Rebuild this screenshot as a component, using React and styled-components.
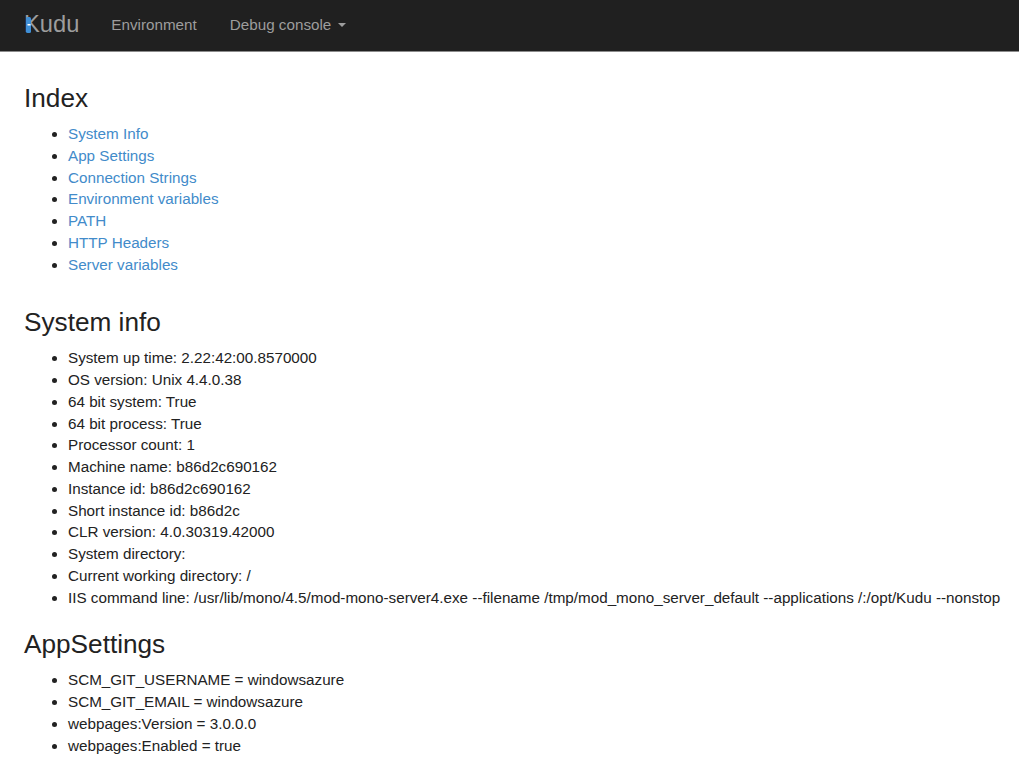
import React from 'react'
import styled, { createGlobalStyle } from 'styled-components'

const GlobalStyle = createGlobalStyle`
  html, body {
    margin: 0;
    padding: 0;
    background: #fff;
    overflow: hidden;
  }
  body {
    font-family: "Liberation Sans", Arial, sans-serif;
    font-size: 15.23px;
    line-height: 21.75px;
    color: #333;
  }
`

const Navbar = styled.nav`
  display: flex;
  align-items: center;
  height: 52px;
  background: #202020;
  border-bottom: 1px solid #8c8c8c;
  padding: 0 0 1px 24px;
  box-sizing: border-box;
`

const Brand = styled.span`
  position: relative;
  font-size: 23.7px;
  color: #9d9d9d;
  margin-right: 32px;
`

const BrandMark = styled.svg`
  position: absolute;
  left: 1px;
  top: 2px;
`

const NavItem = styled.a`
  color: #9d9d9d;
  margin-right: 33px;
  display: flex;
  align-items: center;
`

const Caret = styled.span`
  width: 0;
  height: 0;
  margin-left: 7px;
  border-top: 4px solid #9d9d9d;
  border-left: 4px solid transparent;
  border-right: 4px solid transparent;
`

const Content = styled.main`
  padding-left: 24px;
  white-space: nowrap;
`

const Heading = styled.h2`
  font-size: 26.2px;
  font-weight: 400;
  line-height: 29px;
  color: #222;
  margin: ${(p) => p.$top}px 0 10px;
`

const List = styled.ul`
  margin: 0;
  padding-left: 44px;
`

const Item = styled.li`
  color: #222;
`

const ItemLink = styled.a`
  color: #428bca;
`

const indexLinks = [
  'System Info',
  'App Settings',
  'Connection Strings',
  'Environment variables',
  'PATH',
  'HTTP Headers',
  'Server variables',
]

const systemInfo = [
  'System up time: 2.22:42:00.8570000',
  'OS version: Unix 4.4.0.38',
  '64 bit system: True',
  '64 bit process: True',
  'Processor count: 1',
  'Machine name: b86d2c690162',
  'Instance id: b86d2c690162',
  'Short instance id: b86d2c',
  'CLR version: 4.0.30319.42000',
  'System directory:',
  'Current working directory: /',
  'IIS command line: /usr/lib/mono/4.5/mod-mono-server4.exe --filename /tmp/mod_mono_server_default --applications /:/opt/Kudu --nonstop',
]

const appSettings = [
  'SCM_GIT_USERNAME = windowsazure',
  'SCM_GIT_EMAIL = windowsazure',
  'webpages:Version = 3.0.0.0',
  'webpages:Enabled = true',
]

const App = () => (
  <>
    <GlobalStyle />
    <Navbar>
      <Brand>
        Kudu
        <BrandMark width="8" height="18" viewBox="0 0 8 18">
          <rect x="1" y="1" width="5" height="16" rx="1.5" fill="#3f8fd6" />
          <rect x="2.5" y="8" width="3" height="1.5" fill="#fff" />
        </BrandMark>
      </Brand>
      <NavItem>Environment</NavItem>
      <NavItem>
        Debug console
        <Caret />
      </NavItem>
    </Navbar>
    <Content>
      <Heading $top={32}>Index</Heading>
      <List>
        {indexLinks.map((label) => (
          <Item key={label}>
            <ItemLink>{label}</ItemLink>
          </Item>
        ))}
      </List>
      <Heading $top={33}>System info</Heading>
      <List>
        {systemInfo.map((label) => (
          <Item key={label}>{label}</Item>
        ))}
      </List>
      <Heading $top={22}>AppSettings</Heading>
      <List>
        {appSettings.map((label) => (
          <Item key={label}>{label}</Item>
        ))}
      </List>
    </Content>
  </>
)

export default App
